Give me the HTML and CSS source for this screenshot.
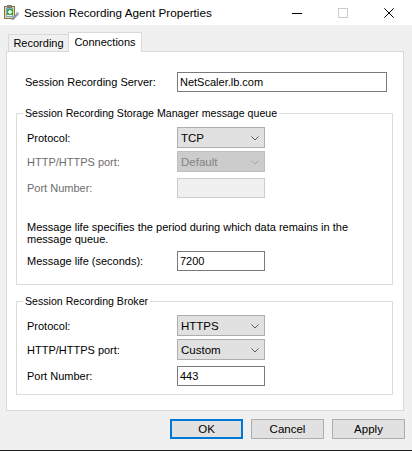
FILE: index.html
```html
<!DOCTYPE html>
<html lang="en">
<head>
<meta charset="utf-8">
<title>Session Recording Agent Properties</title>
<link rel="stylesheet" href="styles.css">
</head>
<body>
<div class="window">
  <div class="titlebar">
    <svg class="app-icon" width="16" height="16" viewBox="0 0 16 16">
      <rect x="1.5" y="2.5" width="10" height="12" fill="#e4d5a8" stroke="#8c7440"/>
      <rect x="3.5" y="4.5" width="6" height="8" fill="#f6f9fc" stroke="#7fa7c9"/>
      <rect x="4" y="1" width="5" height="3" fill="#7d7d7d"/>
      <rect x="4" y="5" width="6" height="6" fill="#3ea84a"/>
      <path d="M7 6v4M5 8h4" stroke="#fff" stroke-width="1.3"/>
      <path d="M9.5 15 L14.5 10" stroke="#8e98a4" stroke-width="2.4" stroke-linecap="round"/>
      <path d="M13 8.5 L15.5 9 L15 11.5" fill="none" stroke="#b7c0c9" stroke-width="1.4"/>
    </svg>
    <span class="title">Session Recording Agent Properties</span>
    <div class="caption-buttons">
      <span class="cap"><svg width="10" height="10" viewBox="0 0 10 10"><path d="M0 5.5h10" stroke="#000" stroke-width="1"/></svg></span>
      <span class="cap"><svg width="10" height="10" viewBox="0 0 10 10"><rect x="0.5" y="0.5" width="9" height="9" fill="none" stroke="#cccccc"/></svg></span>
      <span class="cap"><svg width="10" height="10" viewBox="0 0 10 10"><path d="M0.3 0.3L9.7 9.7M9.7 0.3L0.3 9.7" stroke="#000" stroke-width="1"/></svg></span>
    </div>
  </div>

  <div class="dialog">
    <div class="tabs">
      <div class="tab tab-recording">Recording</div>
      <div class="tab tab-connections active">Connections</div>
    </div>

    <div class="panel">
      <div class="field server-row">
        <span class="label label-wide">Session Recording Server:</span>
        <span class="textbox textbox-wide">NetScaler.lb.com</span>
      </div>

      <fieldset class="group group-queue">
        <legend>Session Recording Storage Manager message queue</legend>
        <div class="field">
          <span class="label">Protocol:</span>
          <span class="combo"><span class="combo-text">TCP</span><svg class="chevron" width="8" height="5" viewBox="0 0 8 5"><path d="M0.5 0.5L4 4L7.5 0.5" fill="none" stroke="#5a5a5a"/></svg></span>
        </div>
        <div class="field field-next">
          <span class="label disabled">HTTP/HTTPS port:</span>
          <span class="combo disabled"><span class="combo-text">Default</span><svg class="chevron" width="8" height="5" viewBox="0 0 8 5"><path d="M0.5 0.5L4 4L7.5 0.5" fill="none" stroke="#a6a6a6"/></svg></span>
        </div>
        <div class="field field-input">
          <span class="label disabled">Port Number:</span>
          <span class="textbox disabled"></span>
        </div>
        <p class="note">Message life specifies the period during which data remains in the<br>message queue.</p>
        <div class="field field-life">
          <span class="label">Message life (seconds):</span>
          <span class="textbox">7200</span>
        </div>
      </fieldset>

      <fieldset class="group group-broker">
        <legend>Session Recording Broker</legend>
        <div class="field">
          <span class="label">Protocol:</span>
          <span class="combo"><span class="combo-text">HTTPS</span><svg class="chevron" width="8" height="5" viewBox="0 0 8 5"><path d="M0.5 0.5L4 4L7.5 0.5" fill="none" stroke="#5a5a5a"/></svg></span>
        </div>
        <div class="field field-next">
          <span class="label">HTTP/HTTPS port:</span>
          <span class="combo"><span class="combo-text">Custom</span><svg class="chevron" width="8" height="5" viewBox="0 0 8 5"><path d="M0.5 0.5L4 4L7.5 0.5" fill="none" stroke="#5a5a5a"/></svg></span>
        </div>
        <div class="field field-input">
          <span class="label">Port Number:</span>
          <span class="textbox">443</span>
        </div>
      </fieldset>
    </div>

    <div class="buttons">
      <span class="btn btn-default">OK</span>
      <span class="btn">Cancel</span>
      <span class="btn">Apply</span>
    </div>
  </div>
</div>
</body>
</html>
```

FILE: styles.css
```css
* {
  box-sizing: border-box;
}

html,
body {
  margin: 0;
  padding: 0;
}

body {
  width: 412px;
  height: 451px;
  overflow: hidden;
  background: #f0f0f0;
  color: #000;
  font-family: "Liberation Sans", Arial, sans-serif;
  font-size: 11px;
}

.window {
  height: 451px;
  display: flex;
  flex-direction: column;
  border-bottom: 1px solid #1e1e1e;
}

/* caption */
.titlebar {
  height: 25px;
  flex: none;
  background: #fff;
  display: flex;
  align-items: center;
}

.app-icon {
  margin-left: 3px;
  margin-top: -2px;
  flex: none;
}

.title {
  margin-left: 5px;
  font-size: 11.7px;
}

.caption-buttons {
  margin-left: auto;
  display: flex;
}

.cap {
  width: 46px;
  height: 25px;
  display: flex;
  align-items: center;
  justify-content: center;
}

/* property sheet */
.dialog {
  flex: 1;
  display: flex;
  flex-direction: column;
  padding-top: 7px;
}

.tabs {
  height: 19px;
  margin-left: 8px;
  display: flex;
  align-items: flex-end;
}

.tab {
  height: 17px;
  border: 1px solid #d9d9d9;
  border-bottom: none;
  text-align: center;
  line-height: 16px;
  background: #f0f0f0;
}

.tab-recording {
  width: 60px;
  border-right: none;
}

.tab-connections {
  width: 74px;
}

.tab.active {
  height: 20px;
  margin-bottom: -1px;
  background: #fff;
  line-height: 18px;
  position: relative;
  z-index: 1;
}

.panel {
  margin-left: 6px;
  width: 398px;
  background: #fff;
  border: 1px solid #d9d9d9;
  padding: 0 0 15px 9px;
}

.field {
  display: flex;
  align-items: center;
}

.label {
  width: 150px;
  flex: none;
}

.label.disabled {
  color: #6d6d6d;
}

.server-row {
  margin-top: 20px;
  padding-left: 9px;
}

.label-wide {
  width: 152px;
}

.textbox {
  width: 88px;
  height: 20px;
  border: 1px solid #7a7a7a;
  background: #fff;
  padding: 0 2px;
  line-height: 18px;
}

.textbox-wide {
  width: 210px;
}

.textbox.disabled {
  background: #f0f0f0;
  border-color: #cccccc;
}

.combo {
  width: 88px;
  height: 21px;
  border: 1px solid #adadad;
  background: #e1e1e1;
  display: flex;
  align-items: center;
  padding: 0 5px 0 3px;
}

.combo-text {
  flex: 1;
  font-size: 11.5px;
}

.combo.disabled {
  background: #cccccc;
  border-color: #bfbfbf;
  color: #838383;
}

.chevron {
  flex: none;
  margin-top: 1px;
}

/* group boxes */
.group {
  margin: 14px 0 0 0;
  width: 377px;
  min-width: 0;
  border: 1px solid #dcdcdc;
  padding: 7px 0 13px 10px;
}

.group legend {
  margin-left: -4px;
  padding: 0 2px;
  line-height: 14px;
  font-size: 10.6px;
}

.group-broker {
  margin-top: 9px;
  padding-bottom: 8px;
}

.field-next {
  margin-top: 3px;
}

.field-input {
  margin-top: 6px;
}

.note {
  margin: 23px 0 0 0;
  line-height: 12px;
}

.field-life {
  margin-top: 6px;
}

/* dialog buttons */
.buttons {
  display: flex;
  justify-content: flex-end;
  gap: 8px;
  margin-top: 8px;
  padding-right: 7px;
}

.btn {
  width: 73px;
  height: 20px;
  border: 1px solid #adadad;
  background: #e1e1e1;
  text-align: center;
  line-height: 18px;
  font-size: 11.5px;
}

.btn-default {
  border: 2px solid #0078d7;
  line-height: 16px;
}
```
